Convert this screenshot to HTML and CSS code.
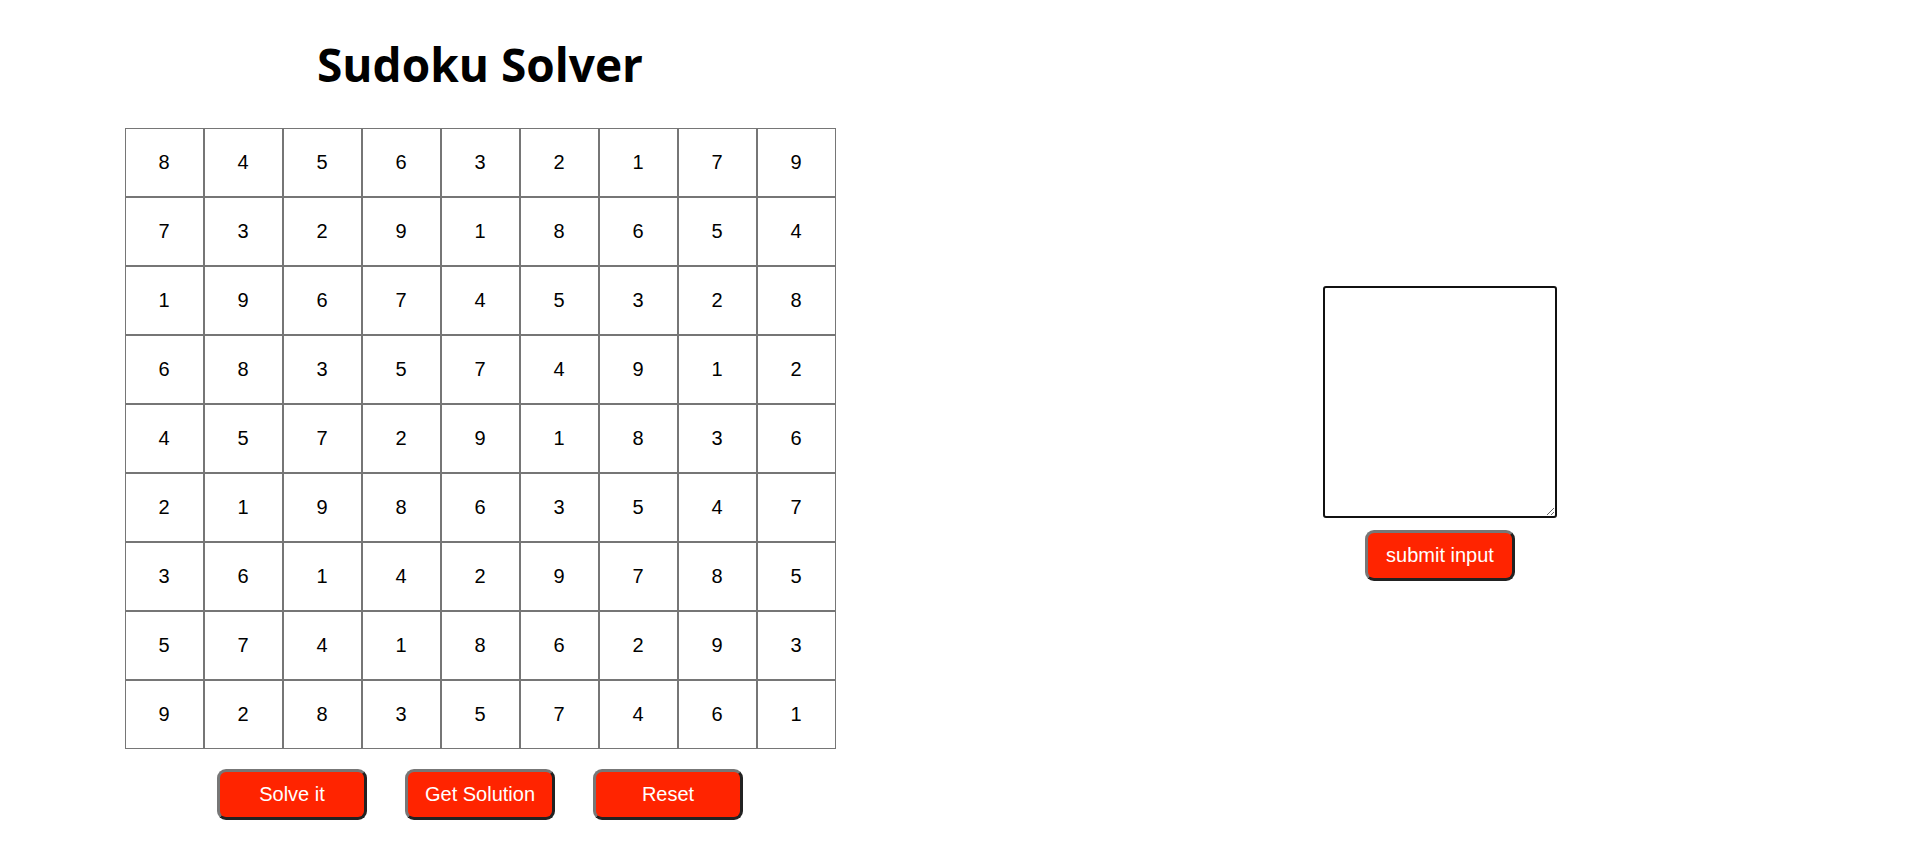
FILE: index.html
```html
<!DOCTYPE html>
<html lang="en">
<head>
<meta charset="utf-8">
<title>Sudoku Solver</title>
<link rel="stylesheet" href="styles.css">
</head>
<body>
<main class="page">
  <section class="solver">
    <h1 class="title">Sudoku Solver</h1>
    <div class="board">
      <input class="cell" value="8"><input class="cell" value="4"><input class="cell" value="5"><input class="cell" value="6"><input class="cell" value="3"><input class="cell" value="2"><input class="cell" value="1"><input class="cell" value="7"><input class="cell" value="9">
      <input class="cell" value="7"><input class="cell" value="3"><input class="cell" value="2"><input class="cell" value="9"><input class="cell" value="1"><input class="cell" value="8"><input class="cell" value="6"><input class="cell" value="5"><input class="cell" value="4">
      <input class="cell" value="1"><input class="cell" value="9"><input class="cell" value="6"><input class="cell" value="7"><input class="cell" value="4"><input class="cell" value="5"><input class="cell" value="3"><input class="cell" value="2"><input class="cell" value="8">
      <input class="cell" value="6"><input class="cell" value="8"><input class="cell" value="3"><input class="cell" value="5"><input class="cell" value="7"><input class="cell" value="4"><input class="cell" value="9"><input class="cell" value="1"><input class="cell" value="2">
      <input class="cell" value="4"><input class="cell" value="5"><input class="cell" value="7"><input class="cell" value="2"><input class="cell" value="9"><input class="cell" value="1"><input class="cell" value="8"><input class="cell" value="3"><input class="cell" value="6">
      <input class="cell" value="2"><input class="cell" value="1"><input class="cell" value="9"><input class="cell" value="8"><input class="cell" value="6"><input class="cell" value="3"><input class="cell" value="5"><input class="cell" value="4"><input class="cell" value="7">
      <input class="cell" value="3"><input class="cell" value="6"><input class="cell" value="1"><input class="cell" value="4"><input class="cell" value="2"><input class="cell" value="9"><input class="cell" value="7"><input class="cell" value="8"><input class="cell" value="5">
      <input class="cell" value="5"><input class="cell" value="7"><input class="cell" value="4"><input class="cell" value="1"><input class="cell" value="8"><input class="cell" value="6"><input class="cell" value="2"><input class="cell" value="9"><input class="cell" value="3">
      <input class="cell" value="9"><input class="cell" value="2"><input class="cell" value="8"><input class="cell" value="3"><input class="cell" value="5"><input class="cell" value="7"><input class="cell" value="4"><input class="cell" value="6"><input class="cell" value="1">
    </div>
    <div class="actions">
      <button class="btn" type="button">Solve it</button>
      <button class="btn" type="button">Get Solution</button>
      <button class="btn" type="button">Reset</button>
    </div>
  </section>
  <section class="input-panel">
    <textarea class="puzzle-input"></textarea>
    <button class="btn" type="button">submit input</button>
  </section>
</main>
</body>
</html>
```
FILE: styles.css
```css
html, body {
  margin: 0;
  padding: 0;
  background: #fff;
}

.page {
  display: flex;
  align-items: flex-start;
  font-family: "Liberation Sans", Arial, sans-serif;
}

.solver {
  width: 960px;
  display: flex;
  flex-direction: column;
  align-items: center;
  padding-top: 37px;
}

.title {
  margin: 0 0 37px;
  font-family: "Open Sans", "Noto Sans", sans-serif;
  font-weight: 700;
  font-size: 46px;
  line-height: 54px;
  color: #000;
}

.board {
  display: grid;
  grid-template-columns: repeat(9, 79px);
  grid-auto-rows: 69px;
}

.cell {
  box-sizing: border-box;
  width: 79px;
  height: 69px;
  margin: 0;
  padding: 0;
  border: 1px solid #767676;
  text-align: center;
  font-family: "Liberation Sans", Arial, sans-serif;
  font-size: 20px;
  color: #000;
  background: #fff;
  outline: none;
}

.actions {
  display: flex;
  gap: 38px;
  margin-top: 20px;
}

.btn {
  box-sizing: border-box;
  width: 150px;
  height: 51px;
  padding: 0;
  background: #ff2400;
  color: #fff;
  font-family: "Liberation Sans", Arial, sans-serif;
  font-size: 20px;
  border: 3px solid;
  border-color: #777 #222 #222 #777;
  border-radius: 9px;
  cursor: pointer;
}

.input-panel {
  flex: 1;
  display: flex;
  flex-direction: column;
  align-items: center;
  gap: 12px;
  padding-top: 286px;
  padding-left: 9px;
}

.puzzle-input {
  box-sizing: border-box;
  width: 234px;
  height: 232px;
  margin: 0;
  border: 2px solid #111;
  border-radius: 3px;
  background: #fff;
}
```
